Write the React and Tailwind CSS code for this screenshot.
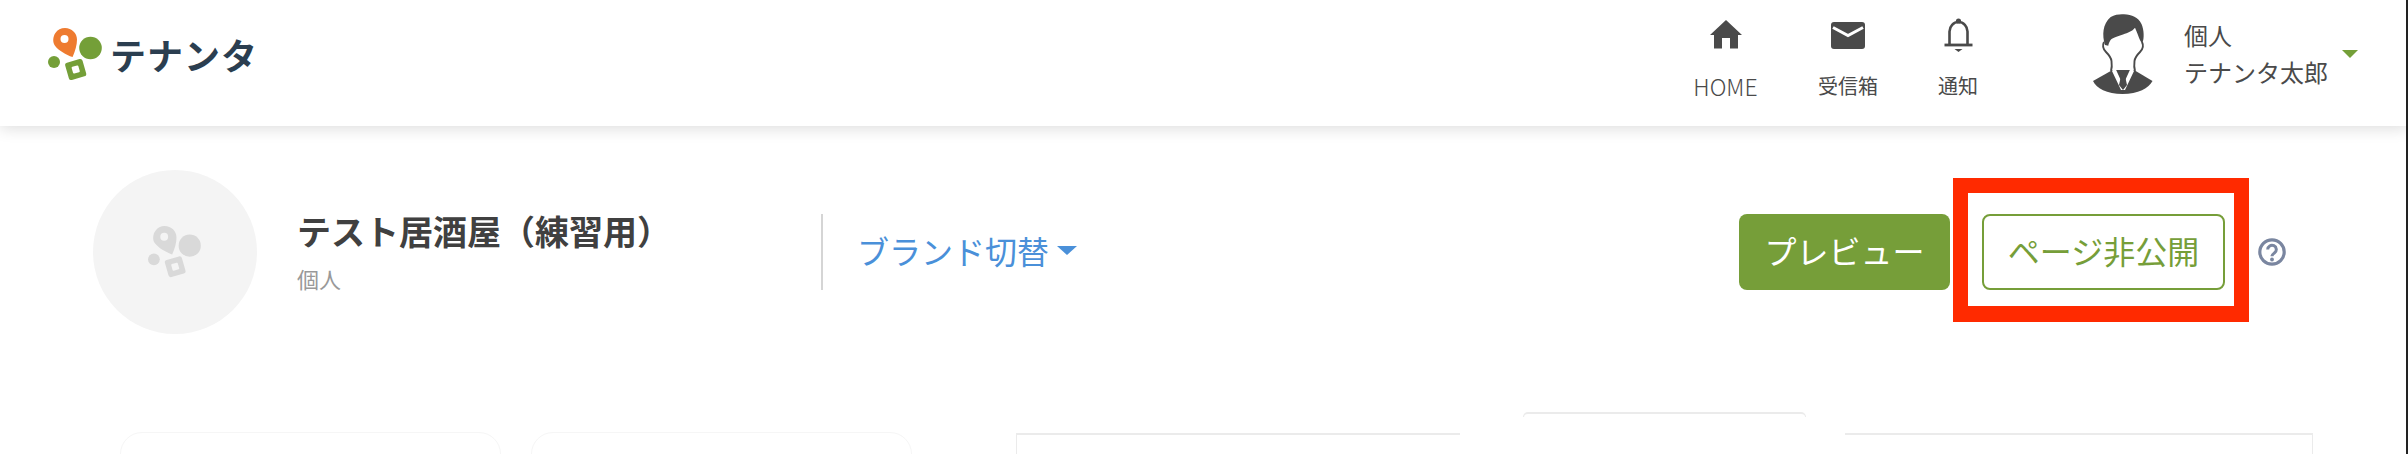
const FONT = "font-['Noto_Sans_CJK_JP','Noto_Sans',sans-serif]";

function Logo({ a, b, hole, w, h, className = "" }) {
  return (
    <svg width={w} height={h} viewBox="48 28 56 54" className={className}>
      <path d="M65 28c6.700 0 12 5.200 12 11.600 0 5-1.600 11.400-4.400 17.400-6.600-2.400-14-6.400-17.800-11.600-2.400-3.400-1.800-9 .6-12.400C57.600 29.800 61 28 65 28z" fill={a} />
      <circle cx="64.500" cy="39" r="4" fill={hole} />
      <circle cx="90.500" cy="48" r="11.300" fill={b} />
      <circle cx="54" cy="62" r="6" fill={b} />
      <g transform="rotate(-16 75.700 69.500)">
        <rect x="66.700" y="60.500" width="18" height="18" rx="2.500" fill={b} />
        <rect x="72.200" y="66" width="7" height="7" rx="1" fill={hole} />
      </g>
    </svg>
  );
}

function HomeIcon() {
  return (
    <svg width="34" height="29" viewBox="0 0 34 29" className="mb-[3px]">
      <path d="M17 0 33 15H29V28.500H21V18H13V28.500H5V15H1Z" fill="#4a4a4a" />
    </svg>
  );
}

function MailIcon() {
  return (
    <svg width="34" height="27" viewBox="0 0 34 27" className="mb-[3px]">
      <rect width="34" height="27" rx="3" fill="#4a4a4a" />
      <path d="M2 5.500 17 13.500 32 5.500" fill="none" stroke="#fff" strokeWidth="3" />
    </svg>
  );
}

function BellIcon() {
  return (
    <svg width="29" height="34" viewBox="0 0 29 34">
      <circle cx="14.500" cy="3" r="2.600" fill="#4a4a4a" />
      <path d="M5.500 26V13.500a9 9.500 0 0 1 18 0V26" fill="none" stroke="#4a4a4a" strokeWidth="2.600" />
      <path d="M.5 27H28.500" stroke="#4a4a4a" strokeWidth="2.800" />
      <path d="M10.500 31H18.500L14.500 34Z" fill="#4a4a4a" />
    </svg>
  );
}

function PersonIcon() {
  return (
    <svg width="62" height="80" viewBox="0 0 62 80">
      <path d="M20.500 56 1 67C4 74 15 80 30.500 80S57 74 60.500 67L42 56Z" fill="#4a4a4a" />
      <path d="M12 28C10.500 31 11 35 14 38 17 41 19 43 19.500 47 20 51 20 54 19 57M50 28C51.500 31 51 35 48 38 45 41 43 43 42.500 47 42 51 42 54 43 57" fill="none" stroke="#4a4a4a" strokeWidth="1.900" />
      <path d="M13 31C10 21 10.500 10 18.700 3 23 .5 28 0 32 .3 40 .8 46 3 49.500 10 52 16 52.500 24 50.300 29.300 47.500 27 46 20 43 13.700 40 17.500 36 18.500 31 20.500 25 22.500 19 24 18 27 17 29 16.500 30 16.300 31.700Z" fill="#4a4a4a" />
      <path d="M23 53.500 31 71 39 53.500 42 57 33 76H29L20 57Z" fill="#fff" />
      <path d="M28 58H34L33 62 35 71 31 76 27 71 29 62Z" fill="#4a4a4a" />
    </svg>
  );
}

function HelpIcon() {
  return (
    <svg width="28" height="28" viewBox="0 0 28 28">
      <circle cx="14" cy="14" r="12.200" fill="none" stroke="#7a86a0" strokeWidth="3.200" />
      <path d="M9.700 11.500a4.300 4.200 0 1 1 6.900 3.300c-1.500 1.100-2.600 1.700-2.600 3.500" fill="none" stroke="#7a86a0" strokeWidth="3" />
      <circle cx="14" cy="21.500" r="1.900" fill="#7a86a0" />
    </svg>
  );
}

function NavItem({ icon, label, width, labelClass }) {
  return (
    <div className={`flex flex-col items-center ${width}`}>
      <div className="flex h-[34px] items-end justify-center">{icon}</div>
      <span className={`mt-[20px] leading-[28px] whitespace-nowrap text-[#4a4a4a] ${labelClass}`}>{label}</span>
    </div>
  );
}

export default function App() {
  return (
    <div className={`relative h-[454px] w-[2408px] overflow-hidden bg-white ${FONT}`}>
      <header className="relative z-10 flex h-[126px] items-start justify-between bg-white pr-[50px] pl-[48px] shadow-[0_3px_14px_rgba(0,0,0,0.13)]">
        <div className="mt-[28px] flex items-center gap-[6px]">
          <Logo a="#ee7b30" b="#749f38" hole="#fff" w={56} h={54} />
          <span className="mb-[2px] text-[36px] leading-none font-bold tracking-[1px] whitespace-nowrap text-[#2b3e50]">テナンタ</span>
        </div>
        <div className="flex items-start">
          <nav className="mt-[18px] flex items-start gap-[60px]">
            <NavItem icon={<HomeIcon />} label="HOME" width="w-[65px]" labelClass="text-[23px] font-light" />
            <NavItem icon={<MailIcon />} label="受信箱" width="w-[60px]" labelClass="text-[20px]" />
            <NavItem icon={<BellIcon />} label="通知" width="w-[40px]" labelClass="text-[20px]" />
          </nav>
          <div className="mt-[14px] ml-[114px] flex items-start">
            <PersonIcon />
            <div className="mt-[2px] ml-[30px] text-[24px] leading-[37px] whitespace-nowrap text-[#4a4a4a]">
              <div>個人</div>
              <div>テナンタ太郎</div>
            </div>
            <div className="mt-[36px] ml-[14px] h-0 w-0 border-x-[8px] border-t-[8px] border-x-transparent border-t-[#749f38]" />
          </div>
        </div>
      </header>

      <section className="mt-[44px] flex items-center justify-between pr-[122px] pl-[93px]">
        <div className="flex items-center">
          <div className="flex h-[164px] w-[164px] items-center justify-center rounded-full bg-[#f4f4f4]">
            <Logo a="#d9d9d9" b="#d9d9d9" hole="#f4f4f4" w={55} h={53} />
          </div>
          <div className="ml-[40px] w-[524px]">
            <div className="mt-[-3px] text-[34px] leading-[44px] font-bold whitespace-nowrap text-[#404040]">テスト居酒屋（練習用）</div>
            <div className="mt-[10px] text-[22px] leading-[30px] text-[#999999]">個人</div>
          </div>
          <div className="h-[76px] w-[2px] bg-[#d5d5d5]" />
          <div className="mb-[4px] ml-[34px] flex items-center">
            <span className="text-[32px] leading-[44px] whitespace-nowrap text-[#4a90d9]">ブランド切替</span>
            <div className="ml-[8px] h-0 w-0 border-x-[10px] border-t-[9px] border-x-transparent border-t-[#4a90d9]" />
          </div>
        </div>
        <div className="flex items-center">
          <button className="h-[76px] w-[211px] rounded-[8px] bg-[#769e39] pb-[4px] text-[32px] whitespace-nowrap text-white">プレビュー</button>
          <div className="relative ml-[32px]">
            <button className="h-[76px] w-[243px] rounded-[8px] border-2 border-[#769e39] bg-white pb-[4px] text-[32px] whitespace-nowrap text-[#769e39]">ページ非公開</button>
            <div className="pointer-events-none absolute -top-[36px] -right-[24px] -bottom-[32px] -left-[29px] border-x-[15px] border-t-[15px] border-b-[16px] border-[#ff2a00]" />
          </div>
          <div className="ml-[33px]"><HelpIcon /></div>
        </div>
      </section>

      <section className="mt-[98px] flex items-start pl-[120px]">
        <div className="h-[60px] w-[381px] rounded-t-[22px] border border-[#f6f6f6]" />
        <div className="ml-[30px] h-[60px] w-[381px] rounded-t-[22px] border border-[#f6f6f6]" />
        <div className="relative mt-px ml-[104px] h-[60px] w-[1297px] border border-t-[2px] border-[#ebebeb]">
          <div className="absolute -top-[2px] left-[443px] h-[6px] w-[385px] bg-white" />
          <div className="absolute -top-[23px] left-[506px] h-[5px] w-[283px] rounded-t-[10px] border-x border-t-2 border-[#ebebeb]" />
        </div>
      </section>

      <div className="absolute top-0 right-0 z-20 h-full w-[2px] bg-[#222222]" />
    </div>
  );
}
